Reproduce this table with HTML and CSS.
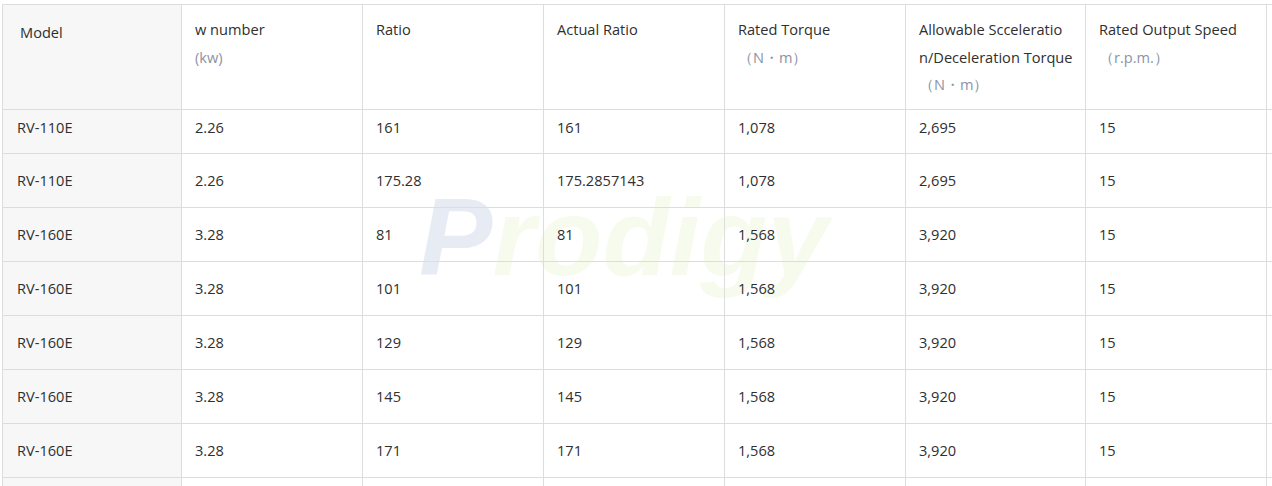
FILE: index.html
```html
<!DOCTYPE html>
<html lang="en">
<head>
<meta charset="utf-8">
<title>RV Reducer Parameters</title>
<link rel="stylesheet" href="styles.css">
</head>
<body>
<div class="page">
  <div class="table-wrap">
    <div class="watermark"><span class="wm-p">P</span><span class="wm-rest">rodigy</span></div>
    <table class="spec">
      <colgroup>
        <col class="c1"><col class="c"><col class="c"><col class="c"><col class="c"><col class="c6"><col class="c"><col class="c">
      </colgroup>
      <thead>
        <tr>
          <th class="first"><div class="model-h">Model</div></th>
          <th>w number<br><span class="unit">(kw)</span></th>
          <th>Ratio</th>
          <th>Actual Ratio</th>
          <th>Rated Torque<br><span class="unit">（N・m）</span></th>
          <th class="wrap">Allowable Scceleration/Deceleration Torque<br><span class="unit">（N・m）</span></th>
          <th>Rated Output Speed<br><span class="unit">（r.p.m.）</span></th>
          <th></th>
        </tr>
      </thead>
      <tbody>
        <tr class="r-first"><td class="first">RV-110E</td><td>2.26</td><td>161</td><td>161</td><td>1,078</td><td>2,695</td><td>15</td><td></td></tr>
        <tr><td class="first">RV-110E</td><td>2.26</td><td>175.28</td><td>175.2857143</td><td>1,078</td><td>2,695</td><td>15</td><td></td></tr>
        <tr><td class="first">RV-160E</td><td>3.28</td><td>81</td><td>81</td><td>1,568</td><td>3,920</td><td>15</td><td></td></tr>
        <tr><td class="first">RV-160E</td><td>3.28</td><td>101</td><td>101</td><td>1,568</td><td>3,920</td><td>15</td><td></td></tr>
        <tr><td class="first">RV-160E</td><td>3.28</td><td>129</td><td>129</td><td>1,568</td><td>3,920</td><td>15</td><td></td></tr>
        <tr><td class="first">RV-160E</td><td>3.28</td><td>145</td><td>145</td><td>1,568</td><td>3,920</td><td>15</td><td></td></tr>
        <tr><td class="first">RV-160E</td><td>3.28</td><td>171</td><td>171</td><td>1,568</td><td>3,920</td><td>15</td><td></td></tr>
        <tr><td class="first">RV-160E</td><td>3.28</td><td>175</td><td>175</td><td>1,568</td><td>3,920</td><td>15</td><td></td></tr>
      </tbody>
    </table>
  </div>
</div>
</body>
</html>
```
FILE: styles.css
```css
html, body {
  margin: 0;
  padding: 0;
  background: #ffffff;
}
.page {
  width: 100vw;
  height: 100vh;
  overflow: hidden;
  padding: 4px 0 0 2px;
  box-sizing: border-box;
}
.table-wrap {
  position: relative;
  width: max-content;
}
.watermark {
  position: absolute;
  left: 417px;
  top: 178px;
  font-family: "Liberation Sans", Arial, sans-serif;
  font-weight: bold;
  font-style: italic;
  font-size: 110px;
  line-height: 1;
  white-space: nowrap;
  z-index: 0;
  pointer-events: none;
}
.wm-p { color: #e7ebf4; }
.wm-rest { color: #f7fbee; }
.spec {
  position: relative;
  z-index: 1;
  border-collapse: collapse;
  table-layout: fixed;
  width: 1446px;
  font-family: "Open Sans", "Noto Sans", sans-serif;
  font-size: 14.6px;
  color: #2f2f2f;
}
.c1 { width: 179px; }
.c { width: 181px; }
.c6 { width: 180px; }
.spec th, .spec td {
  border: 1px solid #dddddd;
  text-align: left;
  font-weight: normal;
}
.spec th {
  vertical-align: top;
  padding: 11px 12px 10px 13px;
  line-height: 27.5px;
  height: 80px;
}
.spec th.wrap {
  word-break: break-all;
}
.spec .first {
  background: #f7f7f7;
}
.model-h {
  padding: 3px 0 0 4px;
}
.unit {
  color: #8b93a5;
}
.spec td {
  vertical-align: middle;
  padding: 0 13px;
  height: 53px;
  line-height: 20px;
}
.spec td.first {
  padding-left: 14px;
}
.spec tr.r-first td {
  height: 36px;
  vertical-align: top;
  padding-top: 7px;
}
```
